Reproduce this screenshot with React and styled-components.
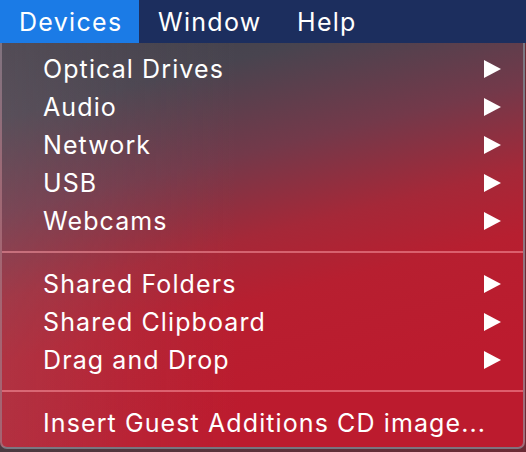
import React from "react";
import styled, { createGlobalStyle } from "styled-components";

const Global = createGlobalStyle`
  html, body { margin: 0; padding: 0; background: #3a2a30; }
  body { font-family: Inter, "Liberation Sans", Arial, sans-serif; }
`;

const Screen = styled.div`
  width: 526px;
  height: 452px;
  display: flex;
  flex-direction: column;
  background: linear-gradient(90deg, #4a3a40 0%, #6b2a34 100%);
  overflow: hidden;
`;

const MenuBar = styled.div`
  height: 43px;
  flex: none;
  display: flex;
  align-items: stretch;
  background: #1c2e5e;
`;

const MenuTitle = styled.div`
  display: flex;
  align-items: center;
  padding-left: 19px;
  color: #fff;
  font-size: 25px;
  letter-spacing: 1.3px;
  width: ${(p) => p.$w}px;
  box-sizing: border-box;
  background: ${(p) => (p.$active ? "#1b7be6" : "transparent")};
`;

const Panel = styled.div`
  width: 525px;
  box-sizing: border-box;
  border: 2px solid rgba(150, 150, 160, 0.6);
  border-top: none;
  border-radius: 0 0 7px 7px;
  background:
    linear-gradient(90deg, rgba(150, 120, 130, 0.22) 0%, rgba(150, 120, 130, 0.08) 25%, transparent 45%),
    linear-gradient(166deg, #40404a 0%, #48444f 14%, #73394a 32%, #a52838 48%, #b71f30 60%, #bc1b2e 80%);
  padding: 7px 0 5px;
  display: flex;
  flex-direction: column;
`;

const Item = styled.div`
  height: 38px;
  flex: none;
  display: flex;
  align-items: center;
  justify-content: space-between;
  padding: 0 22px 0 41px;
  color: #fff;
  font-size: 25px;
  letter-spacing: 1.1px;
`;

const Separator = styled.div`
  height: 2px;
  margin: 11px 0 12px;
  background: rgba(255, 160, 170, 0.5);
`;

const Arrow = () => (
  <svg width="17" height="18" viewBox="0 0 17 18">
    <path d="M0 0 L17 9 L0 18 Z" fill="#fff" />
  </svg>
);

const Row = ({ label, sub }) => (
  <Item>
    <span>{label}</span>
    {sub && <Arrow />}
  </Item>
);

export default function App() {
  return (
    <Screen>
      <Global />
      <MenuBar>
        <MenuTitle $active $w={139}>Devices</MenuTitle>
        <MenuTitle $w={139}>Window</MenuTitle>
        <MenuTitle $w={90}>Help</MenuTitle>
      </MenuBar>
      <Panel>
        <Row label="Optical Drives" sub />
        <Row label="Audio" sub />
        <Row label="Network" sub />
        <Row label="USB" sub />
        <Row label="Webcams" sub />
        <Separator />
        <Row label="Shared Folders" sub />
        <Row label="Shared Clipboard" sub />
        <Row label="Drag and Drop" sub />
        <Separator />
        <Row label="Insert Guest Additions CD image..." />
      </Panel>
    </Screen>
  );
}
